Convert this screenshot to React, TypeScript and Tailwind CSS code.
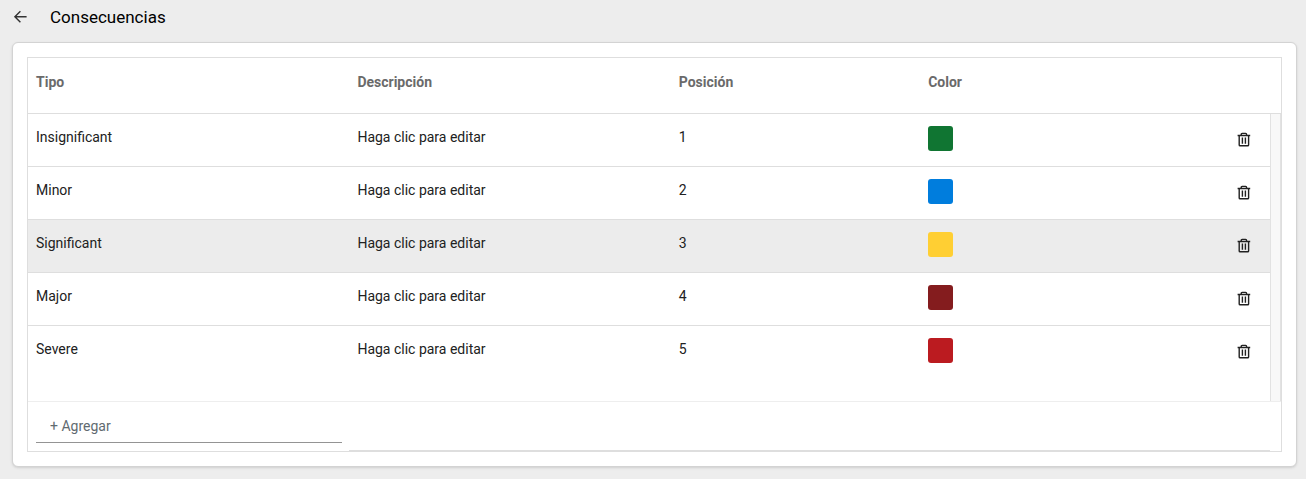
import { useState } from "react";

type Consequence = {
  id: number;
  name: string;
  description: string;
  position: number;
  color: string;
};

const initialRows: Consequence[] = [
  { id: 1, name: "Insignificant", description: "", position: 1, color: "#107532" },
  { id: 2, name: "Minor", description: "", position: 2, color: "#007ddd" },
  { id: 3, name: "Significant", description: "", position: 3, color: "#ffcf33" },
  { id: 4, name: "Major", description: "", position: 4, color: "#841c1e" },
  { id: 5, name: "Severe", description: "", position: 5, color: "#bb1b20" },
];

function ArrowLeftIcon() {
  return (
    <svg
      className="w-4 h-4"
      viewBox="0 0 16 16"
      fill="none"
      stroke="currentColor"
      strokeWidth="1.4"
      aria-hidden="true"
    >
      <path d="M14.6 7.7H3M8.4 2.2L2.9 7.7l5.5 5.5" />
    </svg>
  );
}

function TrashIcon() {
  return (
    <svg
      className="w-4 h-4"
      viewBox="0 0 16 16"
      fill="none"
      stroke="currentColor"
      strokeWidth="1.4"
      aria-hidden="true"
    >
      <path d="M1.6 3.5h12.6M5.2 3.5V2.5Q5.2 1.4 6.2 1.4h3.4Q10.6 1.4 10.6 2.5v1" />
      <path d="M3.2 3.5v9.4q0 .9.9.9h7.6q.9 0 .9-.9V3.5" />
      <path d="M6.4 5.6v6.2M9.4 5.6v6.2" />
    </svg>
  );
}

export default function App() {
  const [rows, setRows] = useState(initialRows);
  const [selectedId, setSelectedId] = useState(3);

  const removeRow = (id: number) => {
    setRows((prev) => prev.filter((r) => r.id !== id));
  };

  return (
    <div className="min-h-screen bg-[#ededed] font-[Roboto,sans-serif] text-[#212121]">
      {/* Page header */}
      <header className="flex items-center gap-[22px] h-[42px] px-3 pb-2">
        <button type="button" aria-label="Volver" className="text-[#333333]">
          <ArrowLeftIcon />
        </button>
        <h1 className="text-[17px] leading-6 text-black">Consecuencias</h1>
      </header>

      {/* Card */}
      <main className="mx-3 mr-[9px] p-3.5 bg-white border border-[#d3d3d3] rounded-md shadow-sm">
        <div className="border border-[#dedede]">
          <table className="w-full table-fixed border-separate border-spacing-0 text-sm text-left">
            <colgroup>
              <col className="w-[25.65%]" />
              <col className="w-[25.65%]" />
              <col className="w-[19.9%]" />
              <col />
              <col className="w-[54px]" />
              <col className="w-[11px]" />
            </colgroup>
            <thead>
              <tr className="h-14 align-top text-[#6a6a6a] [&>th]:px-2 [&>th]:pt-3.5 [&>th]:font-bold [&>th]:border-b [&>th]:border-[#dedede]">
                <th scope="col">Tipo</th>
                <th scope="col">Descripción</th>
                <th scope="col">Posición</th>
                <th scope="col">Color</th>
                <th colSpan={2} />
              </tr>
            </thead>
            <tbody>
              {rows.map((row, index) => {
                const isLast = index === rows.length - 1;
                return (
                  <tr
                    key={row.id}
                    onClick={() => setSelectedId(row.id)}
                    className={`align-top ${isLast ? "h-[75px]" : "h-[53px] [&>.cell]:border-b [&>.cell]:border-[#dedede]"} ${
                      row.id === selectedId ? "[&>.cell]:bg-[#ececec]" : ""
                    }`}
                  >
                    <td className="cell px-2 pt-[13px]">{row.name}</td>
                    <td className="cell px-2 pt-[13px]">
                      {row.description || "Haga clic para editar"}
                    </td>
                    <td className="cell px-2 pt-[13px]">{row.position}</td>
                    <td className="cell px-2 pt-3">
                      <button
                        type="button"
                        aria-label={`Color de ${row.name}`}
                        className="block w-[25px] h-[25px] rounded-[3px]"
                        style={{ backgroundColor: row.color }}
                      />
                    </td>
                    <td className="cell pl-5 pt-[18px]">
                      <button
                        type="button"
                        aria-label={`Eliminar ${row.name}`}
                        className="block"
                        onClick={() => removeRow(row.id)}
                      >
                        <TrashIcon />
                      </button>
                    </td>
                    {index === 0 && (
                      <td
                        rowSpan={rows.length}
                        className="bg-[#f8f8f8] border-x border-[#e2e2e2]"
                      />
                    )}
                  </tr>
                );
              })}
            </tbody>
            <tfoot>
              <tr className="h-[50px] align-top [&>td]:border-t [&>td]:border-t-[#eeeeee]">
                <td className="pl-2 pr-[7px]">
                  <input
                    type="text"
                    aria-label="Agregar consecuencia"
                    placeholder="+ Agregar"
                    className="block w-full h-[41px] px-3.5 pt-2 border-b border-[#949494] outline-none placeholder:text-[#616a70]"
                  />
                </td>
                <td colSpan={4} className="border-b border-b-[#dedede]" />
                <td />
              </tr>
            </tfoot>
          </table>
        </div>
      </main>
    </div>
  );
}
